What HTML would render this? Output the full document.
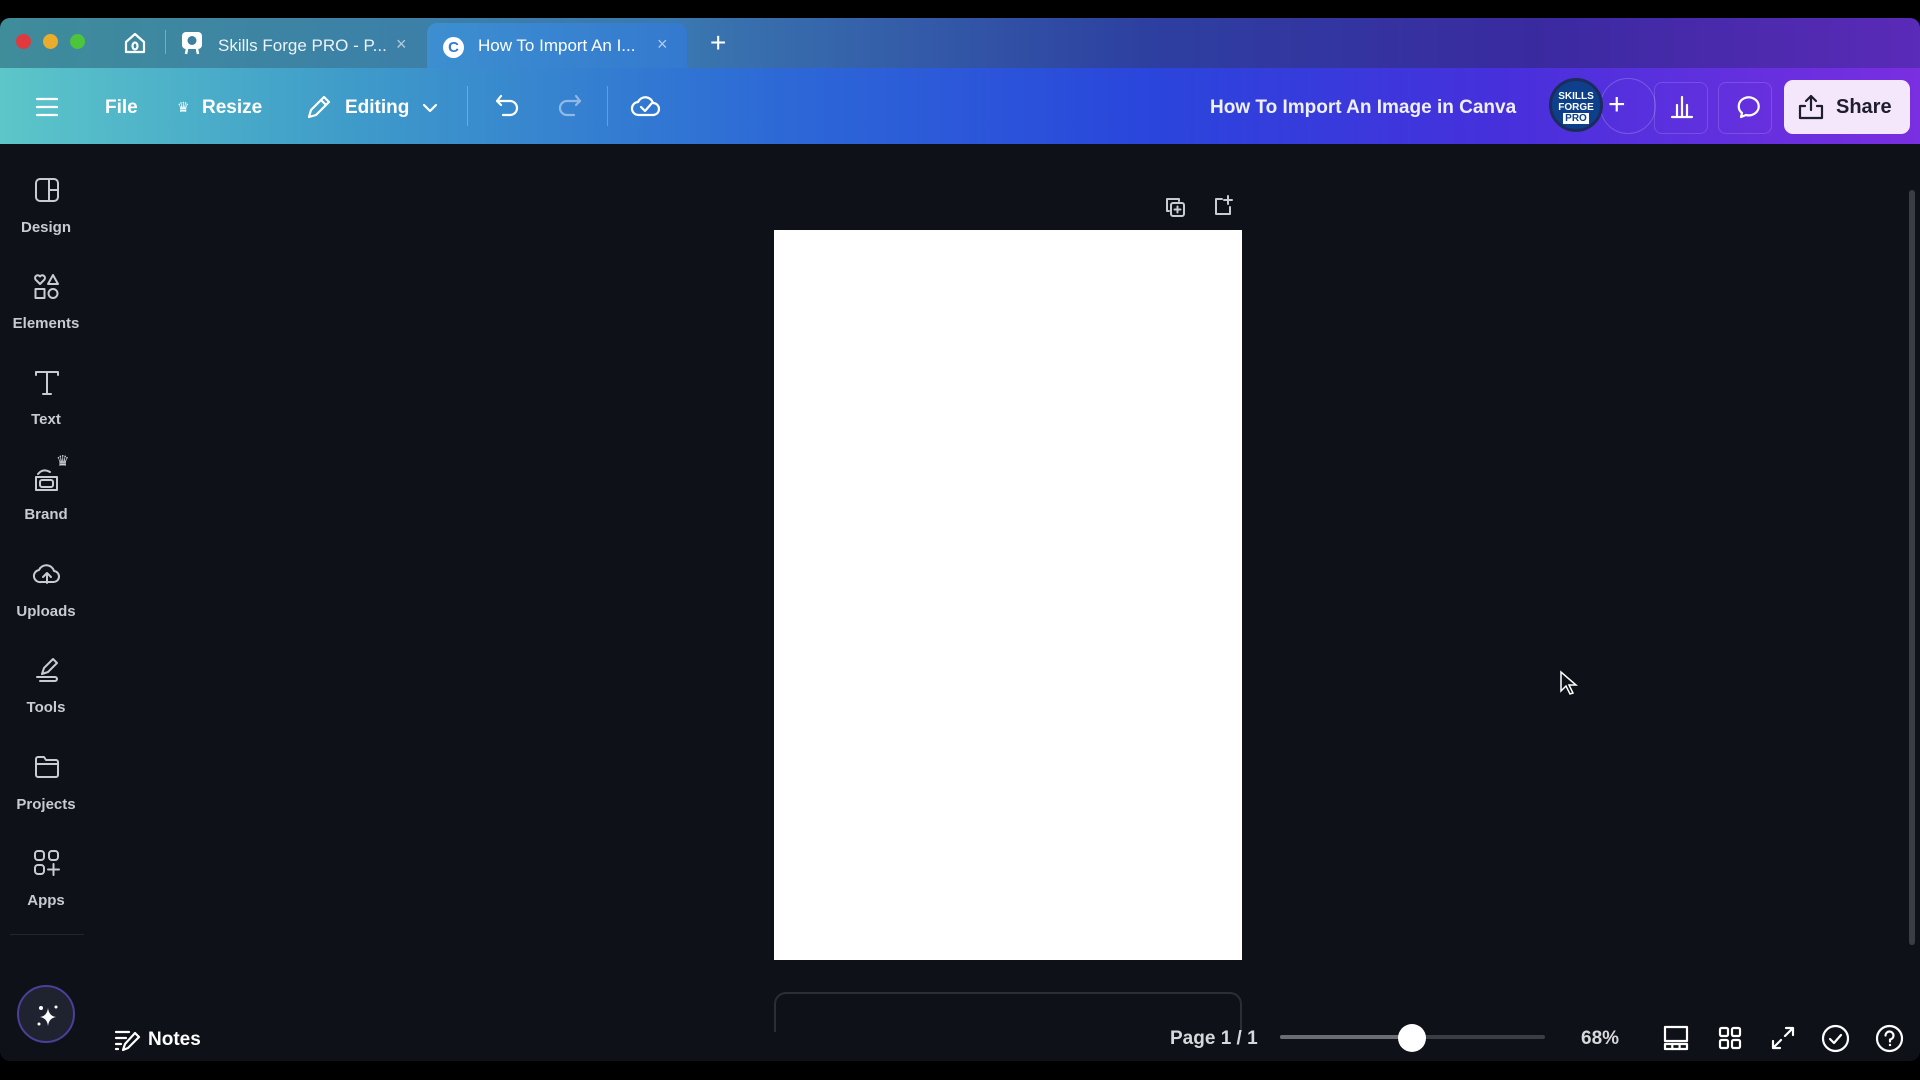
<!DOCTYPE html>
<html><head><meta charset="utf-8"><style>
*{margin:0;padding:0;box-sizing:border-box}
body{width:1920px;height:1080px;background:#000;overflow:hidden;font-family:"Liberation Sans",sans-serif;position:relative}
.app{position:absolute;left:0;top:18px;width:1920px;height:1043px;background:#0e1117;border-radius:10px;overflow:hidden}
.tabbar{position:absolute;left:0;top:0;width:1920px;height:50px;background:linear-gradient(90deg,#3f8c9b 0%,#3a78b0 35%,#2d3fa0 60%,#3a2aa0 80%,#5a2ab8 100%)}
.toolbar{position:absolute;left:0;top:50px;width:1920px;height:76px;background:linear-gradient(90deg,#5cc6c9 0%,#3f9cc9 18%,#2d6ad6 40%,#2a45dc 60%,#4630dc 78%,#7a2fe0 100%)}
.abs{position:absolute}
.w{color:#fff}
.lbl{position:absolute;width:92px;text-align:center;color:#c8ccd2;font-size:15px;font-weight:bold;left:0}
svg{position:absolute;overflow:visible}
.ic{fill:none;stroke:#c8ccd2;stroke-width:2;stroke-linecap:round;stroke-linejoin:round}
.iw{fill:none;stroke:#fff;stroke-width:2.2;stroke-linecap:round;stroke-linejoin:round}
</style></head><body>
<div class="app">
 <div class="tabbar">
  <div class="abs" style="left:16px;top:16px;width:15px;height:15px;border-radius:50%;background:#e0393e"></div>
  <div class="abs" style="left:43px;top:16px;width:15px;height:15px;border-radius:50%;background:#e9ac2c"></div>
  <div class="abs" style="left:70px;top:16px;width:15px;height:15px;border-radius:50%;background:#4cc43c"></div>
  <svg style="left:124px;top:14px" width="22" height="22"><path class="iw" d="M2 10 L11 2 L20 10 V20 H2 Z"/><ellipse cx="11" cy="14" rx="2.5" ry="3.5" class="iw" stroke-width="1.6"/></svg>
  <div class="abs" style="left:165px;top:12px;width:1px;height:24px;background:rgba(255,255,255,.3)"></div>
  <svg style="left:182px;top:14px" width="20" height="22"><rect x="0" y="0" width="20" height="17" rx="4" fill="#fff"/><circle cx="10" cy="8.5" r="4.5" fill="#3d7f9c"/><path d="M5 17L4 22M15 17L16 22" stroke="#fff" stroke-width="2.5"/></svg>
  <div class="abs w" style="left:218px;top:18px;font-size:17px;opacity:.9">Skills Forge PRO - P...</div>
  <div class="abs w" style="left:396px;top:16px;font-size:18px;opacity:.6">×</div>
  <div class="abs" style="left:427px;top:5px;width:260px;height:45px;border-radius:10px 10px 0 0;background:linear-gradient(90deg,#3d8fd0,#3479cf)"></div>
  <div class="abs" style="left:443px;top:19px;width:21px;height:21px;border-radius:50%;background:#fff;color:#3479cf;font-weight:bold;font-size:15px;text-align:center;line-height:21px">C</div>
  <div class="abs w" style="left:478px;top:18px;font-size:17px">How To Import An I...</div>
  <div class="abs w" style="left:657px;top:16px;font-size:18px;opacity:.6">×</div>
  <div class="abs w" style="left:710px;top:9px;font-size:28px;font-weight:300">+</div>
 </div>
 <div class="toolbar">
  <svg style="left:36px;top:29px" width="22" height="20"><path class="iw" d="M1 2H21M1 10H21M1 18H21"/></svg>
  <div class="abs w" style="left:105px;top:29px;font-size:19px;font-weight:bold">File</div>
  <div class="abs w" style="left:177px;top:31px;font-size:14px">♛</div>
  <div class="abs w" style="left:202px;top:29px;font-size:19px;font-weight:bold">Resize</div>
  <svg style="left:306px;top:26px" width="26" height="26"><path class="iw" d="M3 23 L5 16 L18 3 L23 8 L10 21 Z M15 6 L20 11"/></svg>
  <div class="abs w" style="left:345px;top:29px;font-size:19px;font-weight:bold">Editing</div>
  <svg style="left:422px;top:35px" width="16" height="10"><path class="iw" d="M2 2L8 8L14 2"/></svg>
  <div class="abs" style="left:467px;top:18px;width:1px;height:40px;background:rgba(255,255,255,.25)"></div>
  <svg style="left:495px;top:25px" width="26" height="26"><path class="iw" d="M6 3L2 8L6 12M2 8H15A7 7 0 0 1 15 22H8"/></svg>
  <svg style="left:556px;top:25px;opacity:.45" width="26" height="26"><path class="iw" d="M20 3L24 8L20 12M24 8H11A7 7 0 0 0 11 22H18"/></svg>
  <div class="abs" style="left:607px;top:18px;width:1px;height:40px;background:rgba(255,255,255,.25)"></div>
  <svg style="left:631px;top:24px" width="30" height="26"><path class="iw" d="M8 23H22A6 6 0 0 0 22 11A8 8 0 0 0 7 10A6.5 6.5 0 0 0 8 23Z M10 15L14 19L21 11"/></svg>
  <div class="abs w" style="left:1210px;top:29px;font-size:19px;font-weight:bold;opacity:.92">How To Import An Image in Canva</div>
  <div class="abs" style="left:1600px;top:10px;width:56px;height:56px;border-radius:50%;border:1px solid rgba(255,255,255,.2)"></div>
  <div class="abs" style="left:1549px;top:10px;width:54px;height:54px;border-radius:50%;background:#0d3f8a;border:3px solid #1b2c5c;color:#fff;font-size:10px;font-weight:bold;text-align:center;line-height:11px;padding-top:10px">SKILLS<br>FORGE<br><span style="background:#fff;color:#0d3f8a;padding:0 2px">PRO</span></div>
  <div class="abs w" style="left:1608px;top:20px;font-size:30px;font-weight:300">+</div>
  <div class="abs" style="left:1654px;top:14px;width:54px;height:52px;border-radius:8px;border:1px solid rgba(255,255,255,.15)"></div>
  <svg style="left:1671px;top:27px" width="22" height="24"><path class="iw" d="M1 22H21M6 20V10M11 20V2M16 20V10"/></svg>
  <div class="abs" style="left:1718px;top:14px;width:54px;height:52px;border-radius:8px;border:1px solid rgba(255,255,255,.15)"></div>
  <svg style="left:1733px;top:26px" width="26" height="26"><path class="iw" d="M8 23L9 19A10 9 0 1 1 13 21Z"/></svg>
  <div class="abs" style="left:1784px;top:12px;width:126px;height:54px;border-radius:9px;background:#f4e6fb"></div>
  <svg style="left:1798px;top:26px" width="26" height="26"><path fill="none" stroke="#1e1e2e" stroke-width="2.2" stroke-linecap="round" stroke-linejoin="round" d="M13 16V2M8 7L13 2L18 7M7 12H2V24H24V12H19"/></svg>
  <div class="abs" style="left:1836px;top:28px;font-size:20px;font-weight:bold;color:#1e1e2e">Share</div>
 </div>
 <!-- sidebar -->
 <svg style="left:35px;top:160px" width="24" height="24"><rect class="ic" x="1" y="1" width="22" height="22" rx="4"/><path class="ic" d="M14 1V23M14 12H23"/></svg>
 <div class="lbl" style="top:201px">Design</div>
 <svg style="left:34px;top:256px" width="26" height="26"><path class="ic" d="M6 10L1.5 5.5A2.6 2.6 0 0 1 6 2.5A2.6 2.6 0 0 1 10.5 5.5Z M19 1L24 10H14Z"/><rect class="ic" x="1.5" y="15" width="9" height="9"/><circle class="ic" cx="19" cy="19.5" r="4.5"/></svg>
 <div class="lbl" style="top:297px">Elements</div>
 <svg style="left:34px;top:352px" width="26" height="26"><path class="ic" d="M2 5V2H24V5M13 2V24M9 24H17"/></svg>
 <div class="lbl" style="top:393px">Text</div>
 <svg style="left:34px;top:446px" width="28" height="28"><path class="ic" d="M4 10Q9 4 16 8M2 13H23V26H2Z"/><rect class="ic" x="6" y="16" width="13" height="7" rx="2"/></svg>
 <div class="abs" style="left:56px;top:434px;color:#d0d3d8;font-size:15px">♛</div>
 <div class="lbl" style="top:488px">Brand</div>
 <svg style="left:33px;top:543px" width="28" height="24"><path class="ic" d="M8 21H20A5.5 5.5 0 0 0 21 10A8 8 0 0 0 6 9A6 6 0 0 0 8 21Z M14 22V13M10 16L14 12L18 16"/></svg>
 <div class="lbl" style="top:585px">Uploads</div>
 <svg style="left:34px;top:639px" width="26" height="26"><path class="ic" d="M8 17L10 11L19 2L23 6L14 15Z M3 20H21A2 2 0 0 1 21 24H6"/></svg>
 <div class="lbl" style="top:681px">Tools</div>
 <svg style="left:34px;top:737px" width="26" height="24"><path class="ic" d="M2 4A2 2 0 0 1 4 2H10L12 5H22A2 2 0 0 1 24 7V20A2 2 0 0 1 22 22H4A2 2 0 0 1 2 20Z M2 9H24"/></svg>
 <div class="lbl" style="top:778px">Projects</div>
 <svg style="left:34px;top:832px" width="26" height="26"><rect class="ic" x="1" y="1" width="9" height="9" rx="3"/><rect class="ic" x="15" y="1" width="9" height="9" rx="3"/><rect class="ic" x="1" y="15" width="9" height="9" rx="3"/><path class="ic" d="M19.5 14V25M14 19.5H25"/></svg>
 <div class="lbl" style="top:874px">Apps</div>
 <div class="abs" style="left:10px;top:916px;width:74px;height:1px;background:#22262d"></div>
 <div class="abs" style="left:17px;top:967px;width:58px;height:58px;border-radius:50%;background:#1f2330;border:2px solid #4b3f9a"></div>
 <svg style="left:34px;top:984px" width="26" height="26"><path fill="#fff" d="M14 6Q15 14 22 15Q15 16 14 24Q13 16 6 15Q13 14 14 6Z"/><circle cx="7" cy="6" r="2" fill="#fff"/><circle cx="22" cy="5" r="1.5" fill="#fff"/><circle cx="5" cy="22" r="1.5" fill="#fff"/></svg>
 <!-- canvas -->
 <svg style="left:1164px;top:178px" width="22" height="22"><path class="ic" stroke-width="1.8" d="M5 15H3V3H15V5"/><rect class="ic" stroke-width="1.8" x="7" y="7" width="13" height="13" rx="2"/><path class="ic" stroke-width="1.6" d="M13.5 10.5V16.5M10.5 13.5H16.5"/></svg>
 <svg style="left:1212px;top:176px" width="22" height="22"><path class="ic" stroke-width="1.8" d="M10 5H4V20H18V13M16 2V10M12 6H20"/></svg>
 <div class="abs" style="left:774px;top:212px;width:468px;height:730px;background:#fff"></div>
 <div class="abs" style="left:774px;top:974px;width:468px;height:40px;border:2px solid #2a2e35;border-bottom:none;border-radius:12px 12px 0 0"></div>
 <div class="abs" style="left:1909px;top:172px;width:6px;height:755px;border-radius:3px;background:#3a3e44"></div>
 <svg style="left:1560px;top:653px" width="18" height="26"><path d="M1 1V20L6 15L10 23L13 22L9 14H16Z" fill="#0e1117" stroke="#fff" stroke-width="1.5"/></svg>
 <!-- bottom bar -->
 <svg style="left:115px;top:1011px" width="26" height="22"><path class="iw" stroke-width="2" d="M1 3H14M1 9H11M1 15H6M1 20H3M8 21L10 15L20 4L24 8L13 19Z"/></svg>
 <div class="abs w" style="left:148px;top:1011px;font-size:19px;font-weight:bold">Notes</div>
 <div class="abs" style="left:1170px;top:1010px;font-size:19px;font-weight:bold;color:#d6d8dc">Page 1 / 1</div>
 <div class="abs" style="left:1280px;top:1017px;width:265px;height:4px;border-radius:2px;background:#3a3e44"></div>
 <div class="abs" style="left:1280px;top:1017px;width:130px;height:4px;border-radius:2px;background:#6a6e74"></div>
 <div class="abs" style="left:1398px;top:1006px;width:28px;height:28px;border-radius:50%;background:#fff"></div>
 <div class="abs" style="left:1581px;top:1010px;font-size:19px;font-weight:bold;color:#d6d8dc">68%</div>
 <svg style="left:1664px;top:1008px" width="24" height="24"><rect class="iw" stroke-width="1.8" x="1" y="1" width="22" height="14"/><rect class="iw" stroke-width="1.8" x="1" y="18" width="22" height="5"/><path class="iw" stroke-width="1.8" d="M8.3 18V23M15.6 18V23"/></svg>
 <svg style="left:1719px;top:1009px" width="22" height="22"><rect class="iw" stroke-width="1.8" x="1" y="1" width="8" height="8" rx="1.5"/><rect class="iw" stroke-width="1.8" x="13" y="1" width="8" height="8" rx="1.5"/><rect class="iw" stroke-width="1.8" x="1" y="13" width="8" height="8" rx="1.5"/><rect class="iw" stroke-width="1.8" x="13" y="13" width="8" height="8" rx="1.5"/></svg>
 <svg style="left:1771px;top:1008px" width="24" height="24"><path class="iw" stroke-width="2" d="M14 10L22 2M15 2H22V9M10 14L2 22M2 15V22H9"/></svg>
 <svg style="left:1822px;top:1007px" width="27" height="27"><circle class="iw" stroke-width="1.8" cx="13.5" cy="13.5" r="12.5"/><path class="iw" stroke-width="1.8" d="M8 14L12 18L19 10"/></svg>
 <svg style="left:1876px;top:1007px" width="27" height="27"><circle class="iw" stroke-width="1.8" cx="13.5" cy="13.5" r="12.5"/><path class="iw" stroke-width="1.8" d="M9.5 10.5A4 4 0 1 1 14 14.5V16.5"/><circle cx="14" cy="20" r="1.2" fill="#fff"/></svg>
</div>
</body></html>
